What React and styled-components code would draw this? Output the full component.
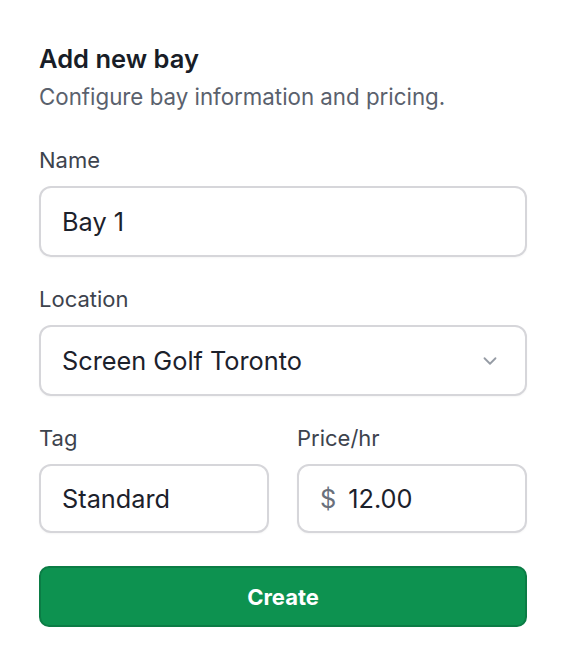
import React from "react";
import styled, { createGlobalStyle } from "styled-components";

const GlobalStyle = createGlobalStyle`
  body {
    margin: 0;
    background: #ffffff;
    font-family: Inter, "Noto Sans", sans-serif;
  }
`;

const Chevron = () => (
  <svg width="22" height="22" viewBox="0 0 24 24" fill="none" stroke="#969ca5" strokeWidth="2" strokeLinecap="round" strokeLinejoin="round">
    <path d="M6 9l6 6 6-6" />
  </svg>
);

export default function App() {
  return (
    <>
      <GlobalStyle />
      <Card>
        <Header>
          <Title>Add new bay</Title>
          <Subtitle>Configure bay information and pricing.</Subtitle>
        </Header>
        <Field>
          <Label>Name</Label>
          <InputBox>
            <Value>Bay 1</Value>
          </InputBox>
        </Field>
        <Field>
          <Label>Location</Label>
          <InputBox>
            <Value>Screen Golf Toronto</Value>
            <Chevron />
          </InputBox>
        </Field>
        <Row>
          <Field>
            <Label>Tag</Label>
            <InputBox $short>
              <Value>Standard</Value>
            </InputBox>
          </Field>
          <Field>
            <Label>Price/hr</Label>
            <InputBox $short>
              <Prefix>$</Prefix>
              <Value>12.00</Value>
            </InputBox>
          </Field>
        </Row>
        <CreateButton>Create</CreateButton>
      </Card>
    </>
  );
}

const Card = styled.div`
  width: 488px;
  padding: 43px 39px 0;
  display: flex;
  flex-direction: column;
`;

const Header = styled.div`
  display: flex;
  flex-direction: column;
  gap: 8px;
  margin-bottom: 37px;
`;

const Title = styled.h2`
  margin: 0;
  font-size: 25.5px;
  line-height: 32px;
  font-weight: 600;
  color: #181d27;
`;

const Subtitle = styled.p`
  margin: 0;
  font-size: 22.3px;
  line-height: 28px;
  color: #5a616d;
`;

const Field = styled.div`
  display: flex;
  flex-direction: column;
  gap: 14px;
  margin-bottom: 30px;
  flex: 1;
`;

const Label = styled.label`
  font-size: 22px;
  line-height: 24px;
  font-weight: 400;
  color: #3d434d;
`;

const InputBox = styled.div`
  box-sizing: border-box;
  height: ${(p) => (p.$short ? "69px" : "71px")};
  border: 2px solid #d6d6da;
  border-radius: 12px;
  padding: 0 24px 0 21px;
  display: flex;
  align-items: center;
  gap: 12px;
  background: #fff;
  box-shadow: 0 1px 2px rgba(0, 0, 0, 0.04);
`;

const Value = styled.span`
  flex: 1;
  font-size: 25.3px;
  color: #1c212b;
`;

const Prefix = styled.span`
  font-size: 25.3px;
  color: #6a707b;
`;

const Row = styled.div`
  display: flex;
  gap: 28px;
  margin-bottom: 3px;
`;

const CreateButton = styled.button`
  height: 61px;
  border: 2px solid #0b7c45;
  border-radius: 10px;
  background: #0d9250;
  color: #ffffff;
  font-family: Inter, "Noto Sans", sans-serif;
  font-size: 22px;
  font-weight: 700;
  cursor: pointer;
`;
